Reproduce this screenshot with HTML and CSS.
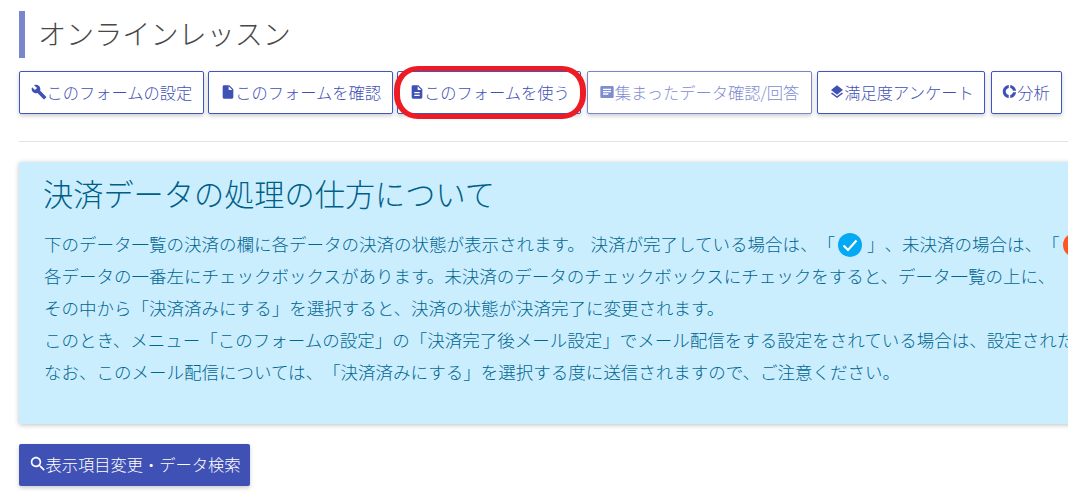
FILE: index.html
```html
<!DOCTYPE html>
<html lang="ja">
<head>
<meta charset="utf-8">
<title>オンラインレッスン</title>
<link rel="stylesheet" href="styles.css">
</head>
<body>
<main class="page">
  <h1 class="page-title">オンラインレッスン</h1>
  <nav class="toolbar">
    <a class="btn"><svg class="ico" viewBox="0 0 24 24"><path d="M22.7 19l-9.1-9.1c.9-2.3.4-5-1.5-6.9-2-2-5-2.4-7.4-1.3L9 6 6 9 1.6 4.7C.4 7.1.9 10.1 2.9 12.1c1.9 1.9 4.6 2.4 6.9 1.5l9.1 9.1c.4.4 1 .4 1.4 0l2.3-2.3c.5-.4.5-1.1.1-1.4z"/></svg>このフォームの設定</a>
    <a class="btn"><svg class="ico" viewBox="0 0 24 24"><path d="M6 2c-1.1 0-2 .9-2 2v16c0 1.1.9 2 2 2h12c1.1 0 2-.9 2-2V8l-6-6H6zm7 7V3.5L18.500 9H13z"/></svg>このフォームを確認</a>
    <span class="btn-mark">
      <a class="btn"><svg class="ico" viewBox="0 0 24 24"><path d="M14 2H6c-1.100 0-2 .9-2 2v16c0 1.100.9 2 2 2h12c1.100 0 2-.9 2-2V8l-6-6zm2 16H8v-2h8v2zm0-4H8v-2h8v2zm-3-5V3.500L18.500 9H13z"/></svg>このフォームを使う</a>
      <span class="red-ring"></span>
    </span>
    <a class="btn btn-muted"><svg class="ico" viewBox="0 0 24 24"><path d="M20 3H4c-1.100 0-2 .9-2 2v14c0 1.100.9 2 2 2h16c1.100 0 2-.9 2-2V5c0-1.100-.9-2-2-2zM6 7h12v2H6V7zm8 9H6v-2h8v2zm4-3.500H6v-2h12v2z"/></svg>集まったデータ確認/回答</a>
    <a class="btn btn-survey"><svg class="ico" viewBox="0 0 24 24"><path d="M11.990 18.540l-7.370-5.730L3 14.070l9 7 9-7-1.630-1.270-7.380 5.740zM12 16l7.360-5.730L21 9l-9-7-9 7 1.630 1.270L12 16z"/></svg>満足度アンケート</a>
    <a class="btn btn-last"><svg class="ico" viewBox="2 2 20 20"><path d="M11 3.200v4.100C8.700 7.800 7 9.700 7 12s1.700 4.200 4 4.700v4.100C6.500 20.300 3 16.600 3 12s3.500-8.300 8-8.800zm2 0v4.100c1.800.4 3.300 1.900 3.700 3.700h4.100c-.5-4.100-3.700-7.300-7.800-7.800zm3.700 9.800c-.4 1.800-1.900 3.300-3.700 3.700v4.100c4.100-.5 7.300-3.700 7.800-7.800h-4.100z"/></svg>分析</a>
  </nav>
  <hr class="rule">
  <section class="notice">
    <h2 class="notice-title">決済データの処理の仕方について</h2>
    <p class="notice-line">下のデータ一覧の決済の欄に各データの決済の状態が表示されます。 決済が完了している場合は、「<svg class="status" viewBox="0 0 24 24"><circle cx="12" cy="12" r="12" fill="#03a9f4"/><path d="M5.500 12.500l4.500 4.500 8.500-9.500" fill="none" stroke="#fff" stroke-width="2.200"/></svg>」、未決済の場合は、「<svg class="status" viewBox="0 0 24 24"><circle cx="12" cy="12" r="12" fill="#ff5722"/></svg>」と表示されます。</p>
    <p class="notice-line">各データの一番左にチェックボックスがあります。未決済のデータのチェックボックスにチェックをすると、データ一覧の上に、</p>
    <p class="notice-line">その中から「決済済みにする」を選択すると、決済の状態が決済完了に変更されます。</p>
    <p class="notice-line">このとき、メニュー「このフォームの設定」の「決済完了後メール設定」でメール配信をする設定をされている場合は、設定されたメールが配信されます。</p>
    <p class="notice-line">なお、このメール配信については、「決済済みにする」を選択する度に送信されますので、ご注意ください。</p>
  </section>
  <a class="btn btn-solid"><svg class="ico" viewBox="2 2 20 20"><path d="M15.500 14h-.8l-.3-.3c1-1.100 1.600-2.600 1.600-4.200C16 5.900 13.100 3 9.500 3S3 5.900 3 9.500 5.900 16 9.500 16c1.600 0 3.100-.6 4.200-1.600l.3.3v.8l5 5 1.500-1.500-5-5zm-6 0C7 14 5 12 5 9.500S7 5 9.500 5 14 7 14 9.500 12 14 9.500 14z"/></svg>表示項目変更・データ検索</a>
</main>
</body>
</html>
```
FILE: styles.css
```css
* { box-sizing: border-box; }
html, body { margin: 0; height: 100%; overflow: hidden; background: #fff; }
body { font-family: "Noto Sans CJK JP", "Noto Sans", sans-serif; font-weight: 300; text-spacing-trim: space-all; }
.page { width: 1200px; padding: 11px 0 0 19px; }
.page-title {
  margin: 0; height: 47px; line-height: 43px;
  padding-left: 13px; border-left: 6px solid #7986cb;
  font-size: 28.125px; font-weight: 300; color: #484848;
}
.toolbar { display: flex; align-items: flex-start; gap: 4px; margin-top: 13px; width: 1042px; }
.btn {
  display: inline-flex; align-items: center; height: 43px; padding: 0 10.500px 2px 11px;
  border: 1px solid #4054c2; border-radius: 2px; background: #fff;
  color: #3f51b5; font-size: 16.25px; white-space: nowrap;
  box-shadow: 0 2px 4px rgba(0,0,0,.2);
}
.ico { width: 16px; height: 16px; flex: none; margin-right: -.5px; fill: currentColor; }
.btn-muted { margin-left: 2px; padding-right: 11.500px; border-color: #7986cb; color: #7f8dd0; }
.btn-survey { margin-left: 1px; }
.btn-last { margin-left: 2px; padding: 0 11.500px 2px 10px; }
.btn-last .ico { width: 15px; height: 15px; margin-right: 0; }
.btn-mark { position: relative; display: inline-flex; }
.red-ring {
  position: absolute; left: -2.500px; top: -5px; width: 192px; height: 53px;
  border-style: solid; border-color: #ed1c24; border-width: 5px 6px; border-radius: 24px;
}
.rule { height: 1px; margin: 27px 0 0; border: 0; background: #e3e3e3; width: 1049px; }
.notice {
  margin-top: 20px; height: 262px; padding: 12px 25px 0; width: 1180px;
  background: #cbeeff; color: #01668f; border-radius: 2px;
  box-shadow: 0 1px 5px rgba(0,0,0,.25);
}
.notice-title { margin: 0 0 16px -1px; font-size: 30.2px; font-weight: 300; line-height: 38px; color: #005f87; white-space: nowrap; }
.notice-line { margin: 0; font-size: 17.5px; line-height: 32px; height: 32px; white-space: nowrap; word-spacing: 2px; color: #01668f; }
.status { width: 24px; height: 24px; vertical-align: -6px; margin: 0 5px 0 3px; }
.btn-solid {
  margin-top: 20px; width: 231px; height: 42px; background: #3f51b5; color: #fff; border: 0; padding: 0 11px 3px;
}
```
